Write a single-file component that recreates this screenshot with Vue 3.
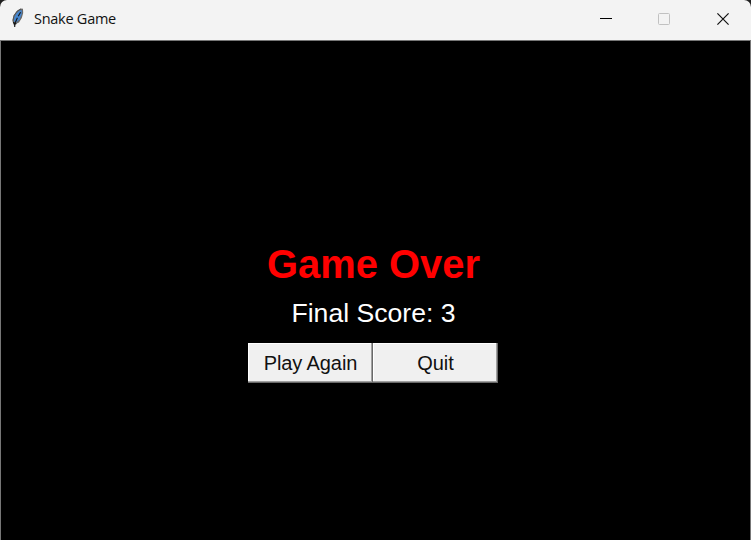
<script setup>
const title = 'Snake Game'
const score = 3
</script>

<template>
  <div class="backdrop">
    <div class="window">
      <header class="titlebar">
        <svg class="feather" width="14" height="20" viewBox="0 0 14 20">
          <path d="M4.4 18.8 L3.4 16 L2.4 13 L3.6 7.5 L7 2.8 L10.5 .6 L13 .8 L13.2 5 L11.8 10 L9 14.4 L5.6 16 Z" fill="#6b6b6b" />
          <path d="M3.9 13.6 L4.4 9 L6.8 5 L9.6 2.4 L11.9 2.2 L11.6 6.5 L9.6 11.4 L6 14.6 Z" fill="#4586cf" />
          <path d="M2.8 12.5 L4 7.5 L7.3 3 L11 1" fill="none" stroke="#444" stroke-width=".7" />
          <path d="M4.7 19 L4.9 15.5 L7.4 9.8 M8.2 8.2 L10.6 4.2 M3.4 14 L4.6 16.3 L6.4 15.4" fill="none" stroke="#151515" stroke-width="1.1" />
        </svg>
        <span class="title">{{ title }}</span>
        <div class="controls">
          <svg width="12" height="12" viewBox="0 0 12 12"><path d="M0 5.5H12" stroke="#000" /></svg>
          <svg width="12" height="12" viewBox="0 0 12 12"><rect x=".5" y=".5" width="11" height="11" rx="1" fill="none" stroke="#c1c1c1" /></svg>
          <svg width="12" height="12" viewBox="0 0 12 12"><path d="M.4 .4L11.6 11.6M11.6 .4L.4 11.6" stroke="#111" stroke-width="1.2" /></svg>
        </div>
      </header>
      <main class="game">
        <h1>Game Over</h1>
        <p>Final Score: {{ score }}</p>
        <div class="actions">
          <button>Play Again</button>
          <button>Quit</button>
        </div>
      </main>
    </div>
  </div>
</template>

<style>
body { margin: 0; background: #000; }
</style>

<style scoped>
.backdrop { width: 751px; height: 540px; background: #202020; overflow: hidden; }
.window {
  display: flex; flex-direction: column; box-sizing: border-box;
  height: 540px; background: #000; border-radius: 7px 7px 0 0; overflow: hidden;
}
.titlebar {
  display: flex; align-items: center; box-sizing: border-box; flex: none;
  height: 41px; padding: 0 22px 3px 10px;
  background: #f3f3f3; border-bottom: 1px solid #777;
}
.feather { flex: none; margin-top: -2px; }
.title {
  margin-left: 10px; font: 14.5px/20px "Open Sans", "Noto Sans", sans-serif;
  letter-spacing: -0.26px; color: #111; white-space: nowrap;
}
.controls { display: flex; margin-left: auto; }
.controls svg { display: block; }
.controls svg:nth-child(2) { margin: 0 47px 0 46px; }
.game {
  flex: 1; display: flex; flex-direction: column; align-items: center;
  box-sizing: border-box; padding: 200px 4px 0 0;
  border: solid #777; border-width: 0 1px;
  font-family: "Liberation Sans", Arial, sans-serif;
}
h1 { margin: 0; font-size: 39.9px; line-height: 46px; font-weight: 700; color: #f00; white-space: nowrap; }
p { margin: 3px 0 0; font-size: 26.6px; line-height: 46px; color: #fff; white-space: nowrap; }
.actions { display: flex; margin: 7px 1px 0 0; }
button {
  display: block; box-sizing: border-box; width: 125px; height: 40px; padding: 0 0 1px;
  border: 0; border-radius: 0; background: #f0f0f0; color: #111;
  box-shadow: inset -1px -1px #696969, inset -2px -2px #a0a0a0, inset 1px 1px #fff;
  font: 20px/36px "Liberation Sans", Arial, sans-serif; letter-spacing: -0.1px;
}
</style>
